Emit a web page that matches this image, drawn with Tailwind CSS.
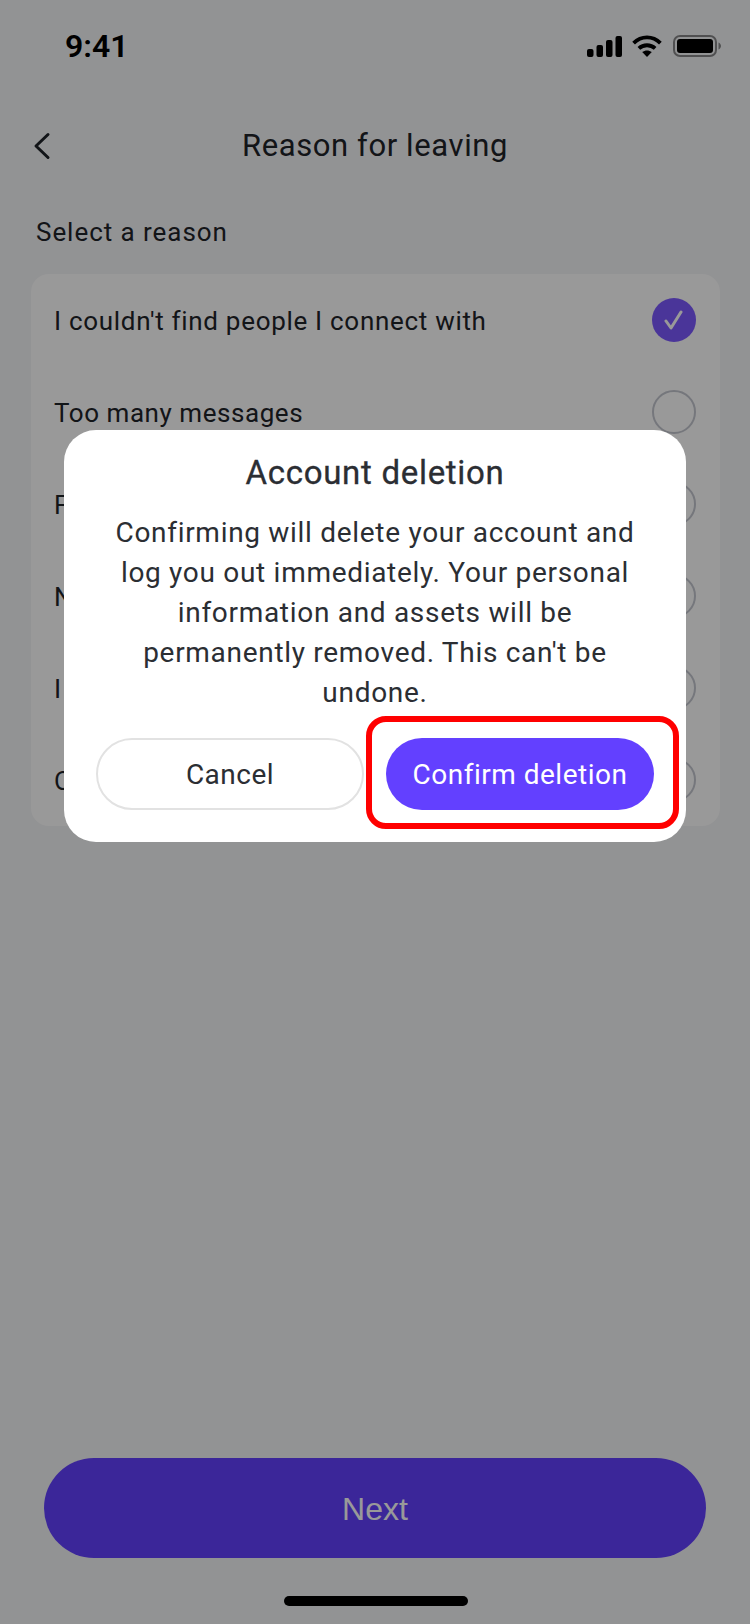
<!DOCTYPE html>
<html lang="en">
  <head>
    <meta charset="UTF-8" />
    <meta name="viewport" content="width=device-width, initial-scale=1.0" />
    <title>Reason for leaving</title>
    <script src="https://cdn.jsdelivr.net/npm/@tailwindcss/browser@4"></script>
  </head>
  <body class="bg-white">
    <div class="relative w-[750px] h-[1624px] overflow-hidden bg-[#f4f5f7] text-[#1f2329] font-['Roboto',sans-serif]">
      <!-- Status bar -->
      <div class="flex items-center justify-between h-[92px] pl-[65px] pr-[29px]">
        <span class="font-semibold text-[32px] leading-none text-black">9:41</span>
        <div class="flex items-center gap-[10px]">
          <svg width="35" height="21" viewBox="0 0 35 21" fill="#000">
            <rect x="0" y="13" width="6.5" height="8" rx="2" />
            <rect x="9.5" y="9" width="6.5" height="12" rx="2" />
            <rect x="19" y="4" width="6.5" height="17" rx="2" />
            <rect x="28.5" y="0" width="6.5" height="21" rx="2" />
          </svg>
          <svg width="30" height="22" viewBox="0 0 31 23" fill="none" stroke="#000" stroke-width="4">
            <path d="M1.5 8.5C9.5 .5 21.5 .5 29.5 8.5" />
            <path d="M7 14C11.8 9.6 19.2 9.6 24 14" />
            <path d="M15.5 23L10.5 17.8C13.4 15.6 17.6 15.6 20.5 17.8Z" fill="#000" stroke="none" />
          </svg>
          <svg class="ml-[1px]" width="48" height="22" viewBox="0 0 48 22" fill="none">
            <rect x="1" y="1" width="42" height="20" rx="6" stroke="#000" stroke-opacity=".45" stroke-width="2" />
            <rect x="4" y="4" width="36" height="14" rx="3" fill="#000" />
            <path d="M45.5 7.5C47 8.2 48 9.4 48 11C48 12.6 47 13.8 45.5 14.5Z" fill="#000" fill-opacity=".45" />
          </svg>
        </div>
      </div>

      <!-- Header -->
      <div class="relative flex items-center justify-center h-[88px] mt-[10px]">
        <svg class="absolute left-[33px] top-[30px]" width="18" height="28" viewBox="0 0 18 28" fill="none" stroke="#1f2329" stroke-width="3" stroke-linecap="round" stroke-linejoin="round">
          <path d="M15 2.5L3 14L15 25.5" />
        </svg>
        <h1 class="text-[31px] leading-[40px] tracking-[0.6px]">Reason for leaving</h1>
      </div>

      <p class="px-[36px] mt-[24px] text-[26px] leading-[36px] tracking-[0.95px]">Select a reason</p>

      <!-- Reasons -->
      <div class="mx-[31px] mt-[24px] w-[689px] rounded-[18px] bg-white">
        <div class="flex items-center justify-between h-[92px] pl-[23px] pr-[24px]">
          <span class="pt-[2px] text-[26px] tracking-[0.7px]">I couldn't find people I connect with</span>
          <span class="flex items-center justify-center size-[44px] rounded-full bg-[#7c59ff]">
            <svg width="22" height="20" viewBox="0 0 22 20" fill="none" stroke="#fff" stroke-width="3" stroke-linecap="round" stroke-linejoin="round"><path d="M3 11L8 18L18 2" /></svg>
          </span>
        </div>
        <div class="flex items-center justify-between h-[92px] pl-[23px] pr-[24px]">
          <span class="pt-[2px] text-[26px] tracking-[0.55px]">Too many messages</span>
          <span class="size-[44px] rounded-full border-2 border-[#c4c6cf]"></span>
        </div>
        <div class="flex items-center justify-between h-[92px] pl-[23px] pr-[24px]">
          <span class="pt-[2px] text-[26px] tracking-[0.6px]">Found another app</span>
          <span class="size-[44px] rounded-full border-2 border-[#c4c6cf]"></span>
        </div>
        <div class="flex items-center justify-between h-[92px] pl-[23px] pr-[24px]">
          <span class="pt-[2px] text-[26px] tracking-[0.6px]">Not interested anymore</span>
          <span class="size-[44px] rounded-full border-2 border-[#c4c6cf]"></span>
        </div>
        <div class="flex items-center justify-between h-[92px] pl-[23px] pr-[24px]">
          <span class="pt-[2px] text-[26px] tracking-[0.6px]">I need a break</span>
          <span class="size-[44px] rounded-full border-2 border-[#c4c6cf]"></span>
        </div>
        <div class="flex items-center justify-between h-[92px] pl-[23px] pr-[24px]">
          <span class="pt-[2px] text-[26px] tracking-[0.6px]">Other</span>
          <span class="size-[44px] rounded-full border-2 border-[#c4c6cf]"></span>
        </div>
      </div>

      <!-- Next -->
      <button class="absolute left-[44px] top-[1458px] flex items-center justify-center w-[662px] h-[100px] pt-[2px] rounded-full bg-[#6340ff] text-white text-[32px] font-['Liberation_Sans',sans-serif]">Next</button>

      <!-- Dim layer -->
      <div class="absolute inset-0 bg-black/40"></div>

      <div class="absolute left-[284px] top-[1596px] w-[184px] h-[10px] rounded-full bg-black"></div>

      <!-- Dialog -->
      <div class="absolute left-[64px] top-[430px] w-[622px] h-[412px] rounded-[32px] bg-white px-[32px] pt-[23px]">
        <h2 class="text-center text-[33px] leading-[40px] tracking-[0.7px] [-webkit-text-stroke:0.3px_#2b2e33] text-[#2b2e33]">Account deletion</h2>
        <p class="mt-[20px] px-[12px] text-center text-[28px] leading-[40px] tracking-[0.7px] text-[#2b2e33]">Confirming will delete your account and log you out immediately. Your personal information and assets will be permanently removed. This can't be undone.</p>
        <div class="flex justify-between mt-[25px]">
          <button class="w-[268px] h-[72px] pt-[2px] rounded-full border-2 border-[#e2e2e2] text-[28px] tracking-[0.5px] text-[#2b2e33]">Cancel</button>
          <button class="w-[268px] h-[72px] pt-[2px] rounded-full bg-[#6340ff] text-[28px] tracking-[0.5px] text-white">Confirm deletion</button>
        </div>
      </div>

      <!-- Highlight -->
      <div class="absolute left-[366px] top-[716px] w-[313px] h-[113px] rounded-[20px] border-[6px] border-[#ff0000]"></div>
    </div>
  </body>
</html>
